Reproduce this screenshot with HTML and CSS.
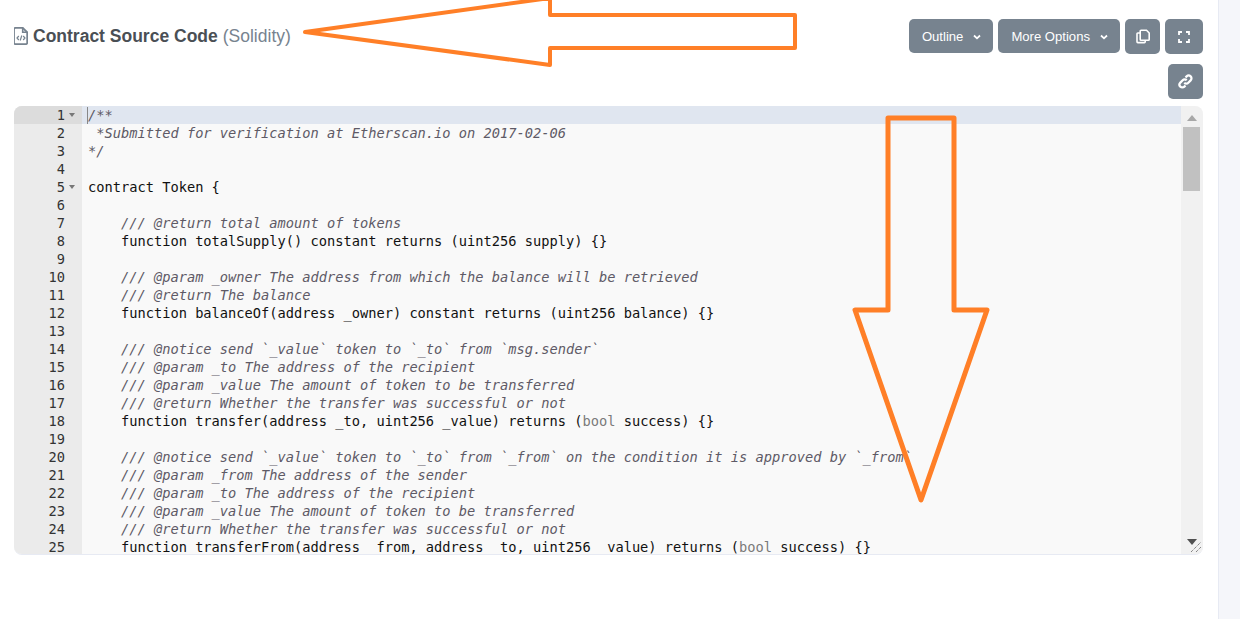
FILE: index.html
```html
<!DOCTYPE html>
<html lang="en">
<head>
<meta charset="utf-8">
<title>Contract Source Code</title>
<link rel="stylesheet" href="styles.css">
</head>
<body>
<div class="page">
  <main class="main">
    <header class="head">
      <h2 class="title">
        <svg class="file-icon" viewBox="0 0 14 18" width="14" height="18"><path d="M1.5.8h7.2l4.5 4.5v10.4a1.5 1.5 0 0 1-1.5 1.5h-10.200a1.500 1.500 0 0 1-1.500-1.500v-13.400a1.500 1.500 0 0 1 1.500-1.500z" fill="none" stroke="#77838f" stroke-width="1.800"/><path d="M8.700.8v4.500h4.500" fill="none" stroke="#77838f" stroke-width="1.600"/><path d="M4.800 9 3 11l1.800 2M9.200 9 11 11l-1.800 2M7.800 8.500 6.200 13.500" fill="none" stroke="#77838f" stroke-width="1.200"/></svg>
        <b>Contract Source Code</b><span class="lang">(Solidity)</span>
      </h2>
      <div class="tools">
        <div class="tool-row">
          <button class="btn btn-text">Outline <svg class="chev" viewBox="0 0 8 6" width="8" height="6"><path d="M1 1.500 4 4.300 7 1.500" fill="none" stroke="#fff" stroke-width="1.800"/></svg></button>
          <button class="btn btn-text">More Options <svg class="chev" viewBox="0 0 8 6" width="8" height="6"><path d="M1 1.500 4 4.300 7 1.500" fill="none" stroke="#fff" stroke-width="1.800"/></svg></button>
          <button class="btn btn-icon btn-copy"><svg viewBox="0 0 14 14" width="14" height="15"><path d="M5 .8h5.500l2.700 2.700v6.500a.8.800 0 0 1-.8.800h-7.400a.8.800 0 0 1-.8-.8v-8.400a.8.800 0 0 1 .8-.8z" fill="none" stroke="#fff" stroke-width="1.600"/><path d="M4 3.500h-2.200a.8.800 0 0 0-.8.800v8a.8.800 0 0 0 .8.800h6.600a.8.800 0 0 0 .8-.8v-1.800" fill="none" stroke="#fff" stroke-width="1.600"/></svg></button>
          <button class="btn btn-icon btn-full"><svg viewBox="0 0 12 12" width="12" height="12"><path d="M1 4v-3h3M8 1h3v3M11 8v3h-3M4 11h-3v-3" fill="none" stroke="#fff" stroke-width="1.800"/></svg></button>
        </div>
        <div class="tool-row">
          <button class="btn btn-icon btn-link"><svg viewBox="0 0 16 16" width="15" height="15"><path d="M6.700 9.300a3 3 0 0 0 4.300 0l2.500-2.500a3 3 0 0 0-4.300-4.300l-1.200 1.200M9.300 6.700a3 3 0 0 0-4.300 0l-2.500 2.500a3 3 0 0 0 4.300 4.300l1.200-1.200" fill="none" stroke="#fff" stroke-width="2.400"/></svg></button>
        </div>
      </div>
    </header>

    <section class="editor">
      <div class="gutter">
        <div class="num active fold">1</div><div class="num">2</div><div class="num">3</div><div class="num">4</div><div class="num fold">5</div><div class="num">6</div><div class="num">7</div><div class="num">8</div><div class="num">9</div><div class="num">10</div><div class="num">11</div><div class="num">12</div><div class="num">13</div><div class="num">14</div><div class="num">15</div><div class="num">16</div><div class="num">17</div><div class="num">18</div><div class="num">19</div><div class="num">20</div><div class="num">21</div><div class="num">22</div><div class="num">23</div><div class="num">24</div><div class="num">25</div>
      </div>
      <div class="code">
        <div class="ln active"><i class="cursor"></i><span class="c">/**</span></div>
        <div class="ln"><span class="c"> *Submitted for verification at Etherscan.io on 2017-02-06</span></div>
        <div class="ln"><span class="c">*/</span></div>
        <div class="ln"></div>
        <div class="ln">contract Token {</div>
        <div class="ln"></div>
        <div class="ln"><span class="c">    /// @return total amount of tokens</span></div>
        <div class="ln">    function totalSupply() constant returns (uint256 supply) {}</div>
        <div class="ln"></div>
        <div class="ln"><span class="c">    /// @param _owner The address from which the balance will be retrieved</span></div>
        <div class="ln"><span class="c">    /// @return The balance</span></div>
        <div class="ln">    function balanceOf(address _owner) constant returns (uint256 balance) {}</div>
        <div class="ln"></div>
        <div class="ln"><span class="c">    /// @notice send `_value` token to `_to` from `msg.sender`</span></div>
        <div class="ln"><span class="c">    /// @param _to The address of the recipient</span></div>
        <div class="ln"><span class="c">    /// @param _value The amount of token to be transferred</span></div>
        <div class="ln"><span class="c">    /// @return Whether the transfer was successful or not</span></div>
        <div class="ln">    function transfer(address _to, uint256 _value) returns (<span class="t">bool</span> success) {}</div>
        <div class="ln"></div>
        <div class="ln"><span class="c">    /// @notice send `_value` token to `_to` from `_from` on the condition it is approved by `_from`</span></div>
        <div class="ln"><span class="c">    /// @param _from The address of the sender</span></div>
        <div class="ln"><span class="c">    /// @param _to The address of the recipient</span></div>
        <div class="ln"><span class="c">    /// @param _value The amount of token to be transferred</span></div>
        <div class="ln"><span class="c">    /// @return Whether the transfer was successful or not</span></div>
        <div class="ln">    function transferFrom(address _from, address _to, uint256 _value) returns (<span class="t">bool</span> success) {}</div>
      </div>
      <div class="vbar">
        <div class="arrow-up"></div>
        <div class="thumb"></div>
        <div class="bar-fill"></div>
        <div class="arrow-down"></div>
      </div>
      <svg class="grip" viewBox="0 0 12 12" width="12" height="12"><path d="M1 11 11 1M6 11l5-5" stroke="#555" stroke-width="1" stroke-dasharray="1 1" fill="none"/></svg>
    </section>
  </main>
  <aside class="rail"></aside>
</div>

<svg class="marks" viewBox="0 0 1240 619" width="1240" height="619">
  <polygon points="305,32 550,-2 550,15 795,15 795,48 550,48 550,65" />
  <polygon class="thick" points="888,118 954,118 954,310 987,310 921,500 855,310 888,310" />
</svg>
</body>
</html>
```
FILE: styles.css
```css
* { box-sizing: border-box; }
html, body { margin: 0; height: 100%; overflow: hidden; background: #fff; }
body { font-family: "Liberation Sans", Arial, sans-serif; color: #4a4f55; }

.page { display: flex; height: 619px; }
.main { flex: 1; min-width: 0; padding: 19px 15px 0 14px; }
.rail { width: 22px; background: #f5f6fa; border-left: 1px solid #e7eaf3; }

.head { display: flex; justify-content: space-between; align-items: flex-start; height: 87px; }
.title { margin: 6px 0 0; font-size: 16px; line-height: 22px; font-weight: 400; display: flex; align-items: center; white-space: pre; }
.title b { font-weight: 700; font-size: 17.500px; color: #4a4f55; }
.lang { font-size: 17.500px; color: #77838f; margin-left: 5px; }
.file-icon { margin-right: 5px; }

.tools { display: flex; flex-direction: column; align-items: flex-end; gap: 10px; }
.tool-row { display: flex; gap: 5px; }
.btn { display: flex; align-items: center; justify-content: center; border: 0; padding: 0; height: 34px; border-radius: 5px; background: #77838f; color: #fff; font: 13.100px/1 "Liberation Sans", Arial, sans-serif; }
.btn-text { padding: 1px 12px 0 13px; gap: 10px; }
.btn-icon { width: 35px; height: 35px; }
.btn-full { width: 38px; }

.editor { position: relative; display: flex; height: 449px; border-radius: 8px; overflow: hidden; background: #f9f9f9; border-bottom: 1px solid #e7eaf3; font: 13.700px/18px "DejaVu Sans Mono", monospace; }
.gutter { width: 68px; flex: none; background: #ebebeb; color: #333; }
.num { position: relative; height: 18px; padding-right: 17px; text-align: right; font-size: 13.700px; }
.num.active { background: #dcdcdc; }
.num.fold::after { content: ""; position: absolute; left: 55px; top: 7px; border: 3.500px solid transparent; border-top: 4px solid #777; border-bottom: 0; }
.code { flex: 1; min-width: 0; color: #111; }
.ln { height: 18px; padding-left: 6px; position: relative; white-space: pre; }
.ln.active { background: #e0e6f0; }
.cursor { position: absolute; left: 5px; top: 1px; width: 1px; height: 17px; background: #888; }
.c { font-style: italic; color: #5e5a66; }
.t { color: #7a7a7a; }

.vbar { width: 22px; flex: none; padding-right: 1px; background: #f1f1f1; display: flex; flex-direction: column; align-items: center; }
.arrow-up { flex: none; margin: 9px 0 6px; width: 0; border: 5px solid transparent; border-top: 0; border-bottom: 6px solid #a8a8a8; }
.thumb { flex: none; width: 17px; height: 64px; background: #c1c1c1; }
.bar-fill { flex: 1; }
.arrow-down { flex: none; margin: 0 0 9px 0; width: 0; border: 5px solid transparent; border-bottom: 0; border-top: 6px solid #505050; }
.grip { position: absolute; right: 1px; bottom: 1px; }

.marks { position: absolute; left: 0; top: 0; pointer-events: none; }
.marks polygon { fill: none; stroke: #ff7f27; stroke-width: 4; stroke-linejoin: round; }
.marks .thick { stroke-width: 5; }
```
